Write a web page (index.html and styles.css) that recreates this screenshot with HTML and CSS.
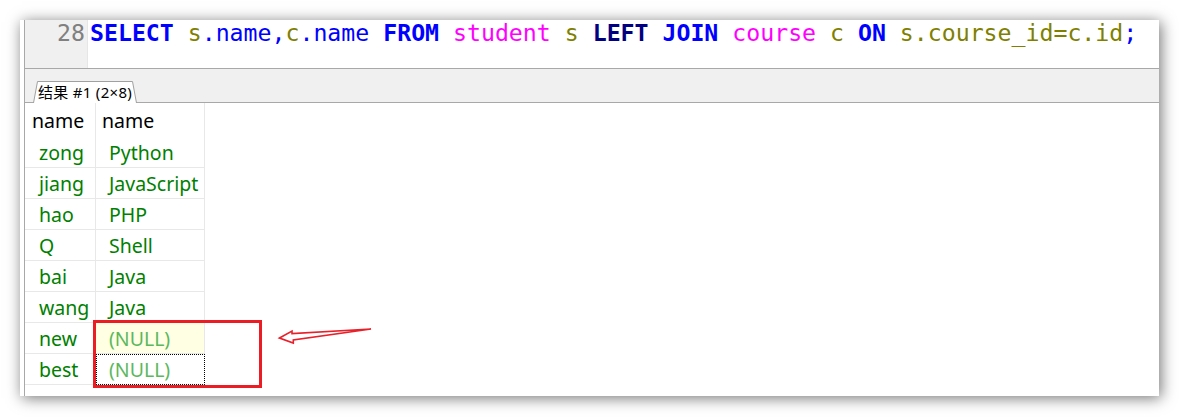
FILE: index.html
```html
<!DOCTYPE html>
<html>
<head>
<meta charset="utf-8">
<link rel="stylesheet" href="styles.css">
</head>
<body>
<div class="window">
  <div class="pane">
    <div class="editor">
      <div class="gutter">28</div>
      <div class="code"><span class="kw">SELECT</span> <span class="id">s</span><span class="op">.name,</span><span class="id">c</span><span class="op">.name</span> <span class="kw">FROM</span> <span class="tb">student</span> <span class="id">s</span> <span class="kw2">LEFT</span> <span class="kw">JOIN</span> <span class="tb">course</span> <span class="id">c</span> <span class="kw">ON</span> <span class="id">s.course_id=c.id</span><span class="op">;</span></div>
    </div>
    <div class="tabbar">
      <div class="tab">
        <svg class="tab-shape" width="105" height="22" viewBox="0 0 105 22"><path d="M0.5 22 L4.5 0.5 L99.5 0.5 L103.5 22" fill="#ffffff" stroke="#a0a0a0" stroke-width="1"/></svg>
        <span class="tab-label">结果 #1 (2×8)</span>
      </div>
    </div>
    <div class="grid">
      <div class="cell head c1">name</div>
      <div class="cell head c2">name</div>
      <div class="cell d1">zong</div><div class="cell d2">Python</div>
      <div class="cell d1">jiang</div><div class="cell d2">JavaScript</div>
      <div class="cell d1">hao</div><div class="cell d2">PHP</div>
      <div class="cell d1">Q</div><div class="cell d2">Shell</div>
      <div class="cell d1">bai</div><div class="cell d2">Java</div>
      <div class="cell d1">wang</div><div class="cell d2">Java</div>
      <div class="cell d1">new</div><div class="cell d2 null hl">(NULL)</div>
      <div class="cell d1">best</div><div class="cell d2 null focus">(NULL)</div>
    </div>
  </div>
</div>
<div class="mark-box"></div>
<svg class="mark-arrow" width="100" height="24" viewBox="275 323 100 24"><path d="M279.5 338 L292 331 L292 333.6 L371 329 L293.3 340 L293.3 343 Z" fill="none" stroke="#e8202a" stroke-width="1.6" stroke-linejoin="miter"/></svg>
</body>
</html>
```
FILE: styles.css
```css
html, body { margin: 0; padding: 0; background: #ffffff; }
body { position: relative; width: 1179px; height: 417px; overflow: hidden; }
.window {
  margin: 20px 0 0 20px;
  width: 1139px;
  height: 376px;
  background: #ffffff;
  box-shadow: 2px 2px 14px rgba(0,0,0,0.55);
  padding-left: 4px;
  box-sizing: border-box;
}
.pane { border-left: 1px solid #a8a8a8; height: 100%; }
.editor {
  display: flex;
  height: 49px;
  border-bottom: 1px solid #a8a8a8;
  box-sizing: border-box;
  font-family: "DejaVu Sans Mono", monospace;
  font-size: 23.2px;
  line-height: 26px;
}
.gutter {
  width: 60px;
  background: #f0f0f0;
  border-right: 1px solid #e6e6e6;
  color: #808080;
  text-align: right;
  padding-right: 2px;
  box-sizing: content-box;
}
.code { padding-left: 2px; white-space: pre; color: #0000ff; }
.kw { color: #0000ff; font-weight: bold; }
.kw2 { color: #000080; font-weight: bold; }
.id { color: #808000; }
.tb { color: #ff00ff; }
.op { color: #0000ff; }
.tabbar {
  height: 34px;
  background: #f0f0f0;
  border-bottom: 1px solid #a8a8a8;
  box-sizing: border-box;
  display: flex;
  align-items: flex-end;
  padding-left: 8px;
}
.tab { position: relative; width: 105px; height: 22px; margin-bottom: -1px; }
.tab-shape { position: absolute; left: 0; top: 0; }
.tab-label {
  position: relative;
  display: block;
  padding-left: 5px;
  font-family: "Noto Sans", "Noto Sans CJK SC", sans-serif;
  font-size: 15px;
  letter-spacing: 0.3px;
  line-height: 22px;
  color: #000000;
  white-space: nowrap;
}
.grid {
  display: grid;
  grid-template-columns: 71px 109px;
  grid-template-rows: 34px;
  grid-auto-rows: 31px;
  font-family: "Noto Sans", sans-serif;
  font-size: 19.5px;
}
.cell {
  box-sizing: border-box;
  border-right: 1px solid #e8e8e8;
  border-bottom: 1px solid #e8e8e8;
  line-height: 30px;
  padding-top: 1px;
  white-space: nowrap;
  color: #008000;
}
.head { border-bottom: none; color: #000000; line-height: 32px; padding-top: 2px; }
.c1 { padding-left: 7px; }
.c2 { padding-left: 6px; }
.d1 { padding-left: 14px; }
.d2 { padding-left: 13px; }
.null { color: #5cb85c; }
.hl { background: #ffffe4; }
.focus { border: 1px dotted #000000; padding-left: 12px; line-height: 29px; padding-top: 0; }
.mark-box {
  position: absolute;
  left: 93px;
  top: 320px;
  width: 169px;
  height: 68px;
  box-sizing: border-box;
  border: 3px solid #ec1c24;
}
.mark-arrow { position: absolute; left: 275px; top: 323px; }
```
